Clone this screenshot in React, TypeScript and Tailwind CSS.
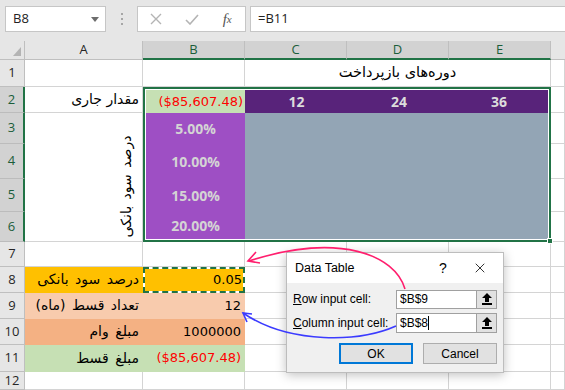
import { X } from 'lucide-react';

const line = 'border-r border-b border-[#d4d4d4]';
const fa = "font-['DejaVu_Sans',sans-serif] text-black whitespace-nowrap";
const num = "font-['DejaVu_Sans',sans-serif] text-[13px]";

function ColHead({ label, sel }: { label: string; sel?: boolean }) {
  return (
    <div
      className={
        sel
          ? 'flex items-center justify-center border-r border-[#bfbfbf] border-b-2 border-b-[#217346] bg-[#d2d2d2] text-[#1b5e3a]'
          : 'flex items-center justify-center border-r border-b border-[#bfbfbf] bg-[#e6e6e6] text-[#262626]'
      }
    >
      {label}
    </div>
  );
}

function RowHead({ n, sel }: { n: number; sel?: boolean }) {
  return (
    <div
      className={
        sel
          ? 'flex items-center justify-center border-b border-[#bcbcbc] border-r-2 border-r-[#217346] bg-[#d2d2d2] text-[#1b5e3a]'
          : 'flex items-center justify-center border-r border-b border-[#bfbfbf] bg-[#e6e6e6] text-[#262626]'
      }
    >
      {n}
    </div>
  );
}

function Blank() {
  return <div className={line} />;
}

function UpArrow() {
  return (
    <svg width="10" height="12" viewBox="0 0 10 12">
      <path d="M5 0 L10 5 L7 5 L7 9 L3 9 L3 5 L0 5 Z" fill="#000" />
      <rect x="0" y="10" width="10" height="2" fill="#000" />
    </svg>
  );
}

// rows 9-11 on the left: label, value, fill colour
const inputs = [
  { n: 9, label: 'تعداد قسط (ماه)', value: '12', bg: 'bg-[#f8cbad]', red: false },
  { n: 10, label: 'مبلغ وام', value: '1000000', bg: 'bg-[#f4b183]', red: false },
  { n: 11, label: 'مبلغ قسط', value: '($85,607.48)', bg: 'bg-[#c6e0b4]', red: true },
];

export default function App() {
  return (
    <div className="relative h-[390px] w-[565px] overflow-hidden bg-white font-['Open_Sans',sans-serif] text-[13px]">
      {/* Formula bar */}
      <div className="flex h-[41px] items-start bg-[#e6e6e6] pt-[6px]">
        <div className="ml-[5px] flex h-[26px] w-[101px] items-center justify-between border border-[#c6c6c6] bg-white pl-[7px] pr-[6px] text-[13px] text-[#222]">
          <span>B8</span>
          <svg width="8" height="5" viewBox="0 0 8 5">
            <path d="M0 0 L8 0 L4 5 Z" fill="#6d6d6d" />
          </svg>
        </div>
        <div className="flex h-[26px] w-[31px] flex-col items-center justify-center gap-[3px]">
          <span className="h-[2px] w-[2px] bg-[#a6a6a6]" />
          <span className="h-[2px] w-[2px] bg-[#a6a6a6]" />
          <span className="h-[2px] w-[2px] bg-[#a6a6a6]" />
        </div>
        <div className="flex h-[26px] w-[109px] items-center border border-[#c6c6c6] bg-white">
          <div className="flex w-[36px] justify-center">
            <svg width="12" height="12" viewBox="0 0 12 12">
              <path d="M1 1 L11 11 M11 1 L1 11" stroke="#b4b4b4" strokeWidth="1.4" />
            </svg>
          </div>
          <div className="flex w-[36px] justify-center">
            <svg width="14" height="11" viewBox="0 0 14 11">
              <path d="M1 6 L5 10 L13 1" stroke="#b4b4b4" strokeWidth="1.6" fill="none" />
            </svg>
          </div>
          <div className="flex w-[36px] justify-center font-['Liberation_Serif',serif] text-[15px] italic text-[#555]">
            f<span className="mt-[3px] text-[11px]">x</span>
          </div>
        </div>
        <div className="ml-[4px] flex h-[26px] flex-1 items-center border-y border-l border-[#c6c6c6] bg-white pl-[7px] text-[13px] text-[#222]">
          =B11
        </div>
      </div>

      {/* Sheet */}
      <div className="grid grid-cols-[25px_118px_102px_102px_102px_102px_14px] grid-rows-[19px_27px_26px_31px_35px_33px_30px_25px_26px_26px_26px_27px_18px] bg-white">
        {/* header row */}
        <div className="relative border-r border-b border-[#bfbfbf] bg-[#e6e6e6]">
          <svg className="absolute bottom-[3px] right-[3px]" width="8" height="9" viewBox="0 0 8 9">
            <path d="M8 0 L8 9 L0 9 Z" fill="#b4b4b4" />
          </svg>
        </div>
        <ColHead label="A" />
        <ColHead label="B" sel />
        <ColHead label="C" sel />
        <ColHead label="D" sel />
        <ColHead label="E" sel />
        <div className="border-b border-[#bfbfbf] bg-[#e6e6e6]" />

        {/* row 1 */}
        <RowHead n={1} />
        <Blank />
        <Blank />
        <div className={`col-span-3 flex items-center justify-center ${line} ${fa} text-[14.5px]`}>
          <span dir="rtl">دوره‌های بازپرداخت</span>
        </div>
        <Blank />

        {/* row 2 */}
        <RowHead n={2} sel />
        <div className={`flex items-center justify-end pr-[3px] ${line} ${fa} text-[14px]`}>
          <span dir="rtl">مقدار جاری</span>
        </div>

        {/* data table B2:E6 */}
        <div className="relative col-start-3 col-span-4 row-start-3 row-span-5 border-2 border-[#217346] bg-white p-px">
          <div className="grid h-full grid-cols-[99px_103px_102px_1fr] grid-rows-[23px_31px_35px_33px_1fr] font-['Open_Sans',sans-serif] text-[14px] font-bold">
            <div className={`flex items-center justify-end bg-[#c6e0b4] pr-[2px] text-[#ff0000] ${num} font-normal`}>
              ($85,607.48)
            </div>
            <div className="flex items-center justify-center bg-[#58237a] text-[#dcdcdc]">12</div>
            <div className="flex items-center justify-center bg-[#58237a] text-[#dcdcdc]">24</div>
            <div className="flex items-center justify-center bg-[#58237a] text-[#dcdcdc]">36</div>
            {['5.00%', '10.00%', '15.00%', '20.00%'].map((p, i) => (
              <div key={p} className="contents">
                <div className="flex items-center justify-center bg-[#9e4fc4] text-[#d4d4d4]">{p}</div>
                {i === 0 && <div className="col-span-3 row-span-4 bg-[#93a5b5]" />}
              </div>
            ))}
          </div>
          <div className="absolute -bottom-[4px] -right-[4px] h-[6px] w-[6px] border border-white bg-[#217346]" />
        </div>
        <Blank />

        {/* rows 3-6 */}
        <RowHead n={3} sel />
        <div className={`col-start-2 row-start-4 row-span-4 flex items-center justify-end pt-[18px] ${line} ${fa} text-[14px] [word-spacing:2px]`}>
          <div className="flex w-[30px] justify-center">
            <span dir="rtl" className="-rotate-90">
              درصد سود بانکی
            </span>
          </div>
        </div>
        <Blank />
        <RowHead n={4} sel />
        <Blank />
        <RowHead n={5} sel />
        <Blank />
        <RowHead n={6} sel />
        <Blank />

        {/* row 7 */}
        <RowHead n={7} />
        <Blank />
        <Blank />
        <Blank />
        <Blank />
        <Blank />
        <Blank />

        {/* row 8 */}
        <RowHead n={8} />
        <div className={`flex items-center justify-end border-r border-b border-transparent bg-[#ffc000] pr-[3px] ${fa} text-[14px] [word-spacing:2px]`}>
          <span dir="rtl">درصد سود بانکی</span>
        </div>
        <div className={`flex items-center justify-end border-2 border-dashed border-[#217346] bg-[#ffc000] bg-clip-padding pr-[1px] ${num} text-[13.5px]`}>
          0.05
        </div>
        <Blank />
        <Blank />
        <Blank />
        <Blank />

        {/* rows 9-11 */}
        {inputs.map((r) => (
          <div key={r.n} className="contents">
            <RowHead n={r.n} />
            <div className={`flex items-center justify-end border-r border-b border-transparent ${r.bg} pr-[3px] ${fa} text-[14px] [word-spacing:2px]`}>
              <span dir="rtl">{r.label}</span>
            </div>
            <div
              className={`flex items-center justify-end border-r border-b border-transparent ${r.bg} pr-[3px] ${num} ${
                r.red ? 'text-[#ff0000]' : 'text-black'
              }`}
            >
              {r.value}
            </div>
            <Blank />
            <Blank />
            <Blank />
            <Blank />
          </div>
        ))}

        {/* row 12 */}
        <RowHead n={12} />
        <Blank />
        <Blank />
        <Blank />
        <Blank />
        <Blank />
        <Blank />
      </div>

      {/* Data Table dialog */}
      <div className="absolute left-[286px] top-[252px] flex h-[121px] w-[218px] flex-col border border-[#bdbdbd] bg-[#f0f0f0] font-['Liberation_Sans',sans-serif] text-[12px] text-black shadow-[0_2px_10px_rgba(0,0,0,0.25)]">
        <div className="flex h-[30px] items-center bg-white pl-[8px] text-[12.5px]">
          <span className="flex-1">Data Table</span>
          <span className="w-[20px] text-center text-[14px]">?</span>
          <span className="flex w-[50px] justify-center pl-[4px]">
            <X size={16} strokeWidth={1.2} />
          </span>
        </div>
        <div className="flex flex-col gap-[5px] px-[6px] pt-[7px]">
          <div className="flex h-[18px] items-center">
            <span className="w-[103px]">
              <span className="underline">R</span>ow input cell:
            </span>
            <div className="flex h-[19px] w-[101px] border border-[#a0a0a0] bg-white">
              <span className="flex-1 pl-[3px] leading-[17px]">$B$9</span>
              <span className="flex w-[20px] items-center justify-center border-l border-[#a0a0a0] bg-[#e1e1e1]">
                <UpArrow />
              </span>
            </div>
          </div>
          <div className="flex h-[19px] items-center">
            <span className="w-[103px]">
              <span className="underline">C</span>olumn input cell:
            </span>
            <div className="flex h-[20px] w-[101px] border border-[#a0a0a0] bg-white">
              <span className="flex-1 pl-[3px] leading-[18px]">
                $B$8<span className="border-l border-black" />
              </span>
              <span className="flex w-[20px] items-center justify-center border-l border-[#a0a0a0] bg-[#e1e1e1]">
                <UpArrow />
              </span>
            </div>
          </div>
        </div>
        <div className="mt-[11px] flex gap-[10px] pl-[52px]">
          <button className="h-[21px] w-[74px] border-2 border-[#0078d7] bg-[#e1e1e1]">OK</button>
          <button className="h-[21px] w-[74px] border border-[#adadad] bg-[#e1e1e1]">Cancel</button>
        </div>
      </div>

      {/* arrows linking the inputs to their cells */}
      <svg className="pointer-events-none absolute inset-0" width="565" height="390" viewBox="0 0 565 390" fill="none">
        <path d="M405 289 C395 255 340 232 249 261" stroke="#ff1f6e" strokeWidth="1.6" />
        <path d="M256 252 L248 261 L260 263" stroke="#ff1f6e" strokeWidth="1.6" />
        <path d="M396 326 C360 342 290 345 243 313" stroke="#3b3bff" strokeWidth="1.6" />
        <path d="M252 314 L243 313 L247 322" stroke="#3b3bff" strokeWidth="1.6" />
      </svg>
    </div>
  );
}
